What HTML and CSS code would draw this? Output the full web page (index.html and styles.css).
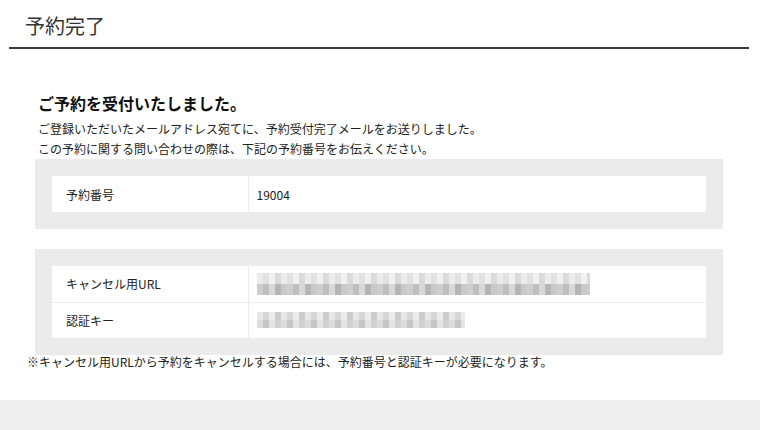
FILE: index.html
```html
<!DOCTYPE html>
<html lang="ja">
<head>
  <meta charset="UTF-8" />
  <meta name="viewport" content="width=device-width, initial-scale=1.0"/>
  <title>予約完了</title>
  <link rel="stylesheet" href="styles.css">
</head>
<body>
  <div class="page-header">
    <h1>予約完了</h1>
  </div>

  <div class="content">
    <h2>ご予約を受付いたしました。</h2>
    <p class="lead">
      ご登録いただいたメールアドレス宛てに、予約受付完了メールをお送りしました。<br>
      この予約に関する問い合わせの際は、下記の予約番号をお伝えください。
    </p>

    <div class="box">
      <table>
        <tr>
          <th>予約番号</th>
          <td>19004</td>
        </tr>
      </table>
    </div>

    <div class="box">
      <table>
        <tr>
          <th>キャンセル用URL</th>
          <td><span class="mosaic mosaic-url"></span></td>
        </tr>
        <tr>
          <th>認証キー</th>
          <td><span class="mosaic mosaic-key"></span></td>
        </tr>
      </table>
    </div>

    <p class="note">※キャンセル用URLから予約をキャンセルする場合には、予約番号と認証キーが必要になります。</p>
  </div>

  <div class="footer"></div>
</body>
</html>
```

FILE: styles.css
```css
* {
  box-sizing: border-box;
  margin: 0;
  padding: 0;
}

body {
  font-family: "Noto Sans CJK JP", "Noto Sans", sans-serif;
  color: #222;
  background: #fff;
}

.page-header {
  margin: 0 11px 0 9px;
  padding: 11px 16px 6px;
  border-bottom: 2px solid #3a3a3a;
}

.page-header h1 {
  font-size: 20px;
  font-weight: normal;
  line-height: 30px;
  color: #333;
}

.content {
  padding: 43px 37px 0 27px;
}

.content h2 {
  margin-left: 11px;
  font-size: 16px;
  font-weight: bold;
  line-height: 22px;
  color: #111;
}

.lead {
  margin: 5px 0 0 11px;
  font-size: 12px;
  line-height: 20px;
}

.box {
  margin: 0 0 20px 8px;
  padding: 17px;
  background: #ebebeb;
}

.box + .box {
  margin-bottom: 0;
}

table {
  width: 100%;
  border-collapse: collapse;
  background: #fff;
  font-size: 12px;
}

th, td {
  height: 36px;
  padding: 0 14px;
  text-align: left;
  vertical-align: middle;
  border-bottom: 1px solid #ebebeb;
}

tr:last-child th,
tr:last-child td {
  border-bottom: none;
}

th {
  width: 196px;
  font-weight: normal;
  border-right: 1px solid #ebebeb;
}

td {
  padding-left: 8px;
}

/* blurred private values */
.mosaic {
  display: block;
  height: 22px;
  background:
    repeating-linear-gradient(90deg, #e9e9e9 0 6px, #dcdcdc 6px 12px, #efefef 12px 18px, #d4d4d4 18px 24px) top / 100% 11px no-repeat,
    repeating-linear-gradient(90deg, #c6c6c6 0 6px, #b3b3b3 6px 12px, #d2d2d2 12px 18px, #a9a9a9 18px 24px, #c0c0c0 24px 30px) bottom / 100% 11px no-repeat;
  opacity: 0.85;
}

.mosaic-url {
  width: 333px;
}

.mosaic-key {
  width: 208px;
  height: 16px;
  background:
    repeating-linear-gradient(90deg, #e2e2e2 0 6px, #cfcfcf 6px 12px, #e9e9e9 12px 18px, #c4c4c4 18px 24px) top / 100% 8px no-repeat,
    repeating-linear-gradient(90deg, #d6d6d6 0 6px, #bdbdbd 6px 12px, #e0e0e0 12px 18px, #c9c9c9 18px 24px) bottom / 100% 8px no-repeat;
}

.note {
  font-size: 12px;
  line-height: 14px;
}

.footer {
  margin-top: 31px;
  height: 40px;
  background: #efefef;
}
```
